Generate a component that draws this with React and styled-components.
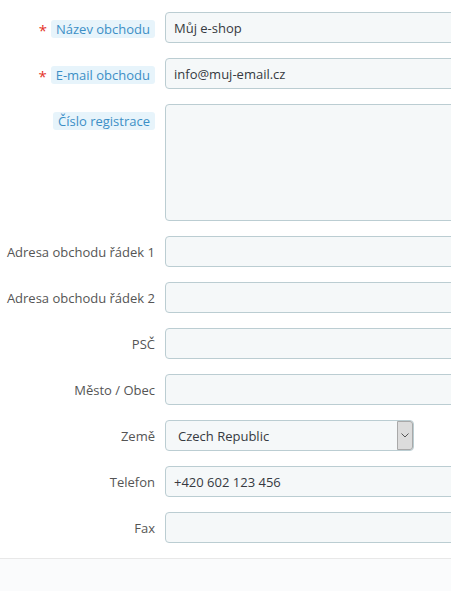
import React from "react";
import styled, { createGlobalStyle } from "styled-components";

const Global = createGlobalStyle`
  html, body {
    margin: 0;
    padding: 0;
    background: #fff;
    overflow: hidden;
  }
  body {
    font-family: "Open Sans", "Noto Sans", sans-serif;
    font-size: 13px;
    color: #363a41;
  }
`;

const Page = styled.div`
  width: 451px;
  height: 591px;
  display: flex;
  flex-direction: column;
  overflow: hidden;
`;

const Form = styled.div`
  display: flex;
  flex-direction: column;
  gap: 15px;
  padding: 12px 0 15px;
`;

const Row = styled.div`
  display: grid;
  grid-template-columns: 155px 320px;
  column-gap: 10px;
  align-items: start;
`;

const LabelCell = styled.div`
  display: flex;
  justify-content: flex-end;
  align-items: center;
  gap: 4px;
  padding-top: ${(p) => (p.$tip ? "8px" : "7px")};
  line-height: 18px;
`;

const Required = styled.span`
  color: #e5332a;
  font-size: 15px;
  line-height: 14px;
  margin-top: 2px;
`;

const Label = styled.span`
  white-space: nowrap;
  color: ${(p) => (p.$tip ? "#3c8fc6" : "#555")};
  background: ${(p) => (p.$tip ? "#e7f4fb" : "transparent")};
  border-radius: 3px;
  padding: ${(p) => (p.$tip ? "0 5px" : "0")};
`;

const Input = styled.div`
  box-sizing: border-box;
  height: ${(p) => p.$h || 31}px;
  width: ${(p) => p.$w || 320}px;
  border: 1px solid #bbcdd2;
  border-radius: 4px;
  background: #f5f8f9;
  padding: 0 8px;
  display: flex;
  align-items: center;
  color: #363a41;
  font-size: 13px;
`;

const Select = styled(Input)`
  position: relative;
  padding-left: 12px;
`;

const Arrow = styled.div`
  position: absolute;
  right: 0;
  top: 0;
  bottom: 0;
  width: 16px;
  box-sizing: border-box;
  background: #dcdcdc;
  border: 1px solid #a9a9a9;
  border-radius: 0 3px 3px 0;
  display: flex;
  align-items: center;
  justify-content: center;
`;

const Footer = styled.div`
  flex: 1;
  border-top: 1px solid #e8e8e8;
  background: #fafbfc;
`;

const Field = ({ label, tip, required, value, h }) => (
  <Row>
    <LabelCell $tip={tip}>
      {required && <Required>*</Required>}
      <Label $tip={tip}>{label}</Label>
    </LabelCell>
    <Input $h={h}>{value}</Input>
  </Row>
);

export default function App() {
  return (
    <Page>
      <Global />
      <Form>
        <Field label="Název obchodu" tip required value="Můj e-shop" />
        <Field label="E-mail obchodu" tip required value="info@muj-email.cz" />
        <Field label="Číslo registrace" tip h={117} />
        <Field label="Adresa obchodu řádek 1" />
        <Field label="Adresa obchodu řádek 2" />
        <Field label="PSČ" />
        <Field label="Město / Obec" />
        <Row>
          <LabelCell>
            <Label>Země</Label>
          </LabelCell>
          <Select $w={249}>
            Czech Republic
            <Arrow>
              <svg width="8" height="5" viewBox="0 0 8 5">
                <path d="M0.5 0.5 L4 4 L7.5 0.5" fill="none" stroke="#555" strokeWidth="1" />
              </svg>
            </Arrow>
          </Select>
        </Row>
        <Field label="Telefon" value="+420 602 123 456" />
        <Field label="Fax" />
      </Form>
      <Footer />
    </Page>
  );
}
